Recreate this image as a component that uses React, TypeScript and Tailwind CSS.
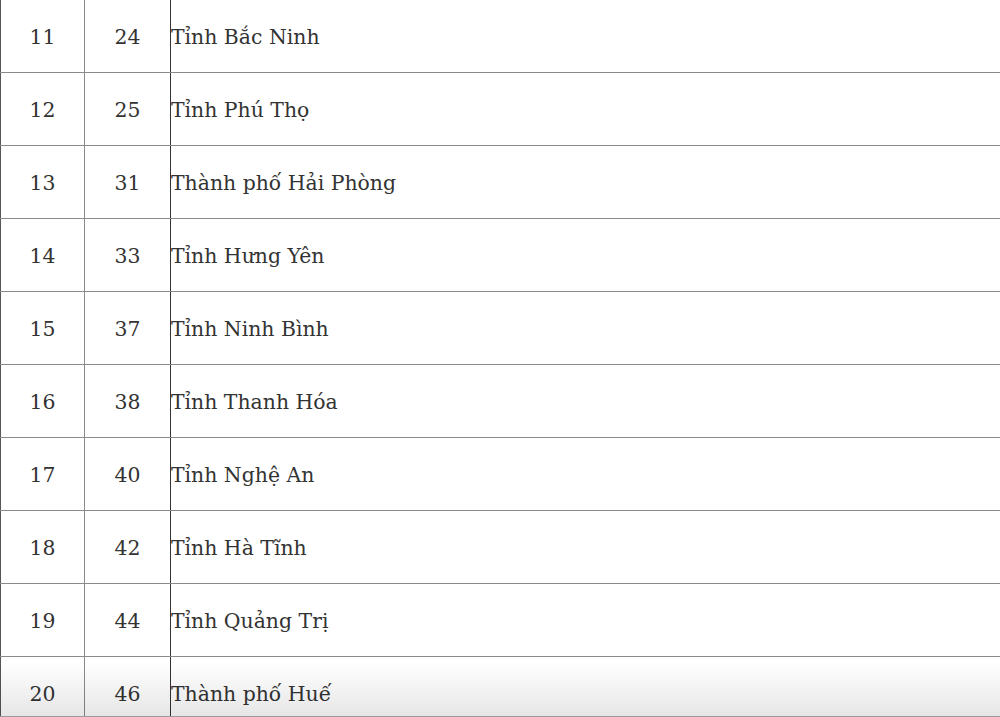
import React from "react";

const rows: [number, number, string][] = [
  [11, 24, "Tỉnh Bắc Ninh"],
  [12, 25, "Tỉnh Phú Thọ"],
  [13, 31, "Thành phố Hải Phòng"],
  [14, 33, "Tỉnh Hưng Yên"],
  [15, 37, "Tỉnh Ninh Bình"],
  [16, 38, "Tỉnh Thanh Hóa"],
  [17, 40, "Tỉnh Nghệ An"],
  [18, 42, "Tỉnh Hà Tĩnh"],
  [19, 44, "Tỉnh Quảng Trị"],
  [20, 46, "Thành phố Huế"],
];

export default function App() {
  return (
    <div className="relative w-[1000px] h-[717px] overflow-hidden bg-white">
      <div
        className="text-[#333] text-[20.4px]"
        style={{ fontFamily: '"DejaVu Serif", "Liberation Serif", serif' }}
      >
        {rows.map(([a, b, name]) => (
          <div key={a} className="flex h-[73px] border-b border-[#8a8a8a]">
            <div className="w-[85px] flex items-center justify-center pt-[2px] border-l border-[#555] border-r border-r-[#8a8a8a]">
              {a}
            </div>
            <div className="w-[86px] flex items-center justify-center pt-[2px] border-r border-[#333]">
              {b}
            </div>
            <div className="flex-1 flex items-center pt-[2px]">{name}</div>
          </div>
        ))}
      </div>
      <div className="absolute left-0 right-0 bottom-0 h-[55px] bg-gradient-to-b from-transparent to-black/10 pointer-events-none" />
      <div className="absolute left-0 right-0 bottom-0 h-[1px] bg-[#999]" />
    </div>
  );
}
